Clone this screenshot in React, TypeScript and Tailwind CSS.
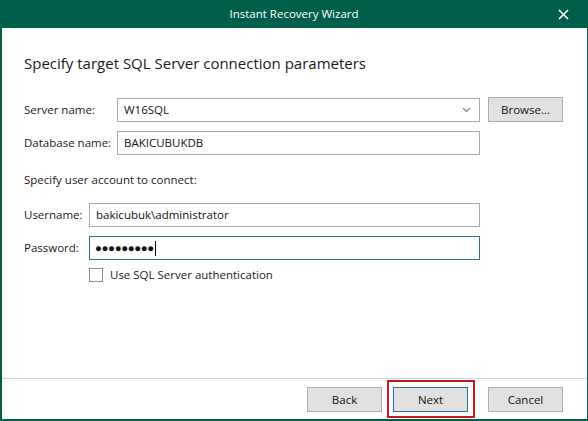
import React from 'react'

// Instant Recovery Wizard — SQL Server connection step (Veeam-style dialog).

const FONT = "font-['Segoe_UI','Open_Sans',sans-serif]"

function TextBox({
    value,
    focused = false,
    children,
    className = '',
}: {
    value?: string
    focused?: boolean
    children?: React.ReactNode
    className?: string
}) {
    return (
        <div
            className={`h-[24px] flex items-center px-[6px] bg-white border text-[11.5px] text-[#111] ${
                focused ? 'border-[#2d6fa3]' : 'border-[#a9a9a9]'
            } ${className}`}
        >
            {value}
            {children}
        </div>
    )
}

function Button({
    label,
    primary = false,
}: {
    label: string
    primary?: boolean
}) {
    return (
        <button
            type="button"
            className={`w-[75px] h-[25px] flex items-center justify-center bg-[#e1e1e1] border text-[11.5px] text-[#111] ${
                primary ? 'border-[#2d6fa3]' : 'border-[#adadad]'
            }`}
        >
            {label}
        </button>
    )
}

export default function App() {
    return (
        <div
            className={`w-[588px] h-[421px] bg-[#005f4b] flex flex-col ${FONT}`}
        >
            {/* Title bar */}
            <div className="relative h-[28px] shrink-0 flex items-center justify-center text-white text-[11.5px]">
                Instant Recovery Wizard
                <svg
                    className="absolute right-[19px] top-[9px]"
                    width="11"
                    height="11"
                    viewBox="0 0 11 11"
                    fill="none"
                >
                    <path
                        d="M1 1l9 9M10 1L1 10"
                        stroke="white"
                        strokeWidth="1.6"
                    />
                </svg>
            </div>

            {/* Client area */}
            <div className="relative flex-1 flex flex-col bg-white ml-[2px] mr-[1px] mb-[2px]">
                <div className="flex-1 pl-[22px] pt-[25px]">
                    <h1 className="text-[15px] leading-[20px] text-[#1a1a1a]">
                        Specify target SQL Server connection parameters
                    </h1>

                    <div className="mt-[24px] grid grid-cols-[93px_363px_8px_75px] gap-y-[9px] items-center text-[11.5px] text-[#1a1a1a]">
                        <span>Server name:</span>
                        <TextBox className="justify-between">
                            <span>W16SQL</span>
                            <svg
                                width="9"
                                height="6"
                                viewBox="0 0 9 6"
                                fill="none"
                                className="mr-[2px]"
                            >
                                <path
                                    d="M1 1l3.5 3.5L8 1"
                                    stroke="#8a8a8a"
                                    strokeWidth="1.3"
                                />
                            </svg>
                        </TextBox>
                        <span />
                        <Button label="Browse..." />

                        <span>Database name:</span>
                        <TextBox value="BAKICUBUKDB" />
                        <span />
                        <span />
                    </div>

                    <p className="mt-[17px] text-[11.5px] leading-[16px] text-[#1a1a1a]">
                        Specify user account to connect:
                    </p>

                    <div className="mt-[15px] grid grid-cols-[65px_391px] gap-y-[9px] items-center text-[11.5px] text-[#1a1a1a]">
                        <span>Username:</span>
                        <TextBox value="bakicubuk\administrator" />

                        <span>Password:</span>
                        <TextBox focused className="pl-[5px]">
                            <span className="text-[11.5px] tracking-[-0.4px] text-[#111]">
                                ●●●●●●●●●
                            </span>
                            <span className="ml-[1px] w-[1px] h-[15px] bg-black" />
                        </TextBox>

                        <span />
                        <label className="flex items-center gap-[7px] -mt-[3px]">
                            <span className="w-[14px] h-[14px] border border-[#8f8f8f] bg-white" />
                            <span>Use SQL Server authentication</span>
                        </label>
                    </div>
                </div>

                {/* Footer */}
                <div className="h-[41px] shrink-0 border-t border-[#d4d4d4] flex items-start justify-end pt-[8px] pr-[24px]">
                    <Button label="Back" />
                    <div className="ml-[11px]">
                        <Button label="Next" primary />
                    </div>
                    <div className="ml-[20px]">
                        <Button label="Cancel" />
                    </div>
                </div>

                {/* Red highlight around Next */}
                <div className="absolute left-[385px] top-[352px] w-[88px] h-[38px] border-2 border-[#c8161d] pointer-events-none" />
            </div>
        </div>
    )
}
